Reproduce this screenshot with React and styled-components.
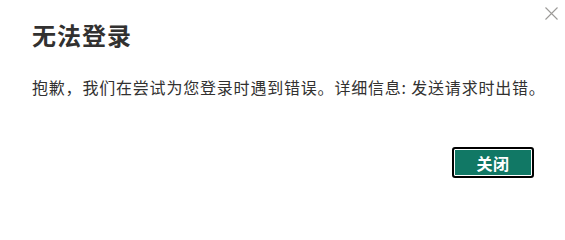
import React from 'react';
import styled, { createGlobalStyle } from 'styled-components';

const GlobalStyle = createGlobalStyle`
  html, body {
    margin: 0;
    padding: 0;
    background: #ffffff;
  }
`;

const Dialog = styled.div`
  position: relative;
  box-sizing: border-box;
  width: 565px;
  height: 209px;
  padding: 19px 31px 31px 32px;
  display: flex;
  flex-direction: column;
  background: #ffffff;
  font-family: 'Noto Sans CJK SC', 'Noto Sans', sans-serif;
  color: #323130;
`;

const Title = styled.h1`
  margin: 0;
  font-size: 24px;
  line-height: 32px;
  font-weight: 700;
  letter-spacing: 1px;
  color: #323130;
`;

const Message = styled.p`
  margin: 25px 0 0;
  font-size: 16px;
  line-height: 22px;
  font-weight: 400;
  letter-spacing: 0.8px;
  color: #323130;
  white-space: nowrap;
`;

const Footer = styled.div`
  margin-top: auto;
  display: flex;
  justify-content: flex-end;
`;

const PrimaryButton = styled.button`
  box-sizing: border-box;
  width: 82px;
  height: 31px;
  padding: 0;
  border: 2px solid #000000;
  border-radius: 3px;
  background: #117865;
  box-shadow: inset 0 0 0 1px #ffffff;
  color: #ffffff;
  font-family: inherit;
  font-size: 16px;
  font-weight: 700;
  letter-spacing: 0.5px;
  line-height: 1;
  cursor: pointer;
`;

const CloseButton = styled.button`
  position: absolute;
  top: 4px;
  right: 5px;
  width: 18px;
  height: 18px;
  padding: 0;
  border: none;
  background: transparent;
  display: flex;
  align-items: center;
  justify-content: center;
  cursor: pointer;
`;

const CloseIcon = () => (
  <svg width="13" height="13" viewBox="0 0 13 13" fill="none">
    <path d="M0.5 0.5 L12.5 12.5 M12.5 0.5 L0.5 12.5" stroke="#9c9a98" strokeWidth="1.1" />
  </svg>
);

export default function App() {
  return (
    <>
      <GlobalStyle />
      <Dialog>
        <CloseButton aria-label="关闭">
          <CloseIcon />
        </CloseButton>
        <Title>无法登录</Title>
        <Message>抱歉，我们在尝试为您登录时遇到错误。详细信息: 发送请求时出错。</Message>
        <Footer>
          <PrimaryButton>关闭</PrimaryButton>
        </Footer>
      </Dialog>
    </>
  );
}
